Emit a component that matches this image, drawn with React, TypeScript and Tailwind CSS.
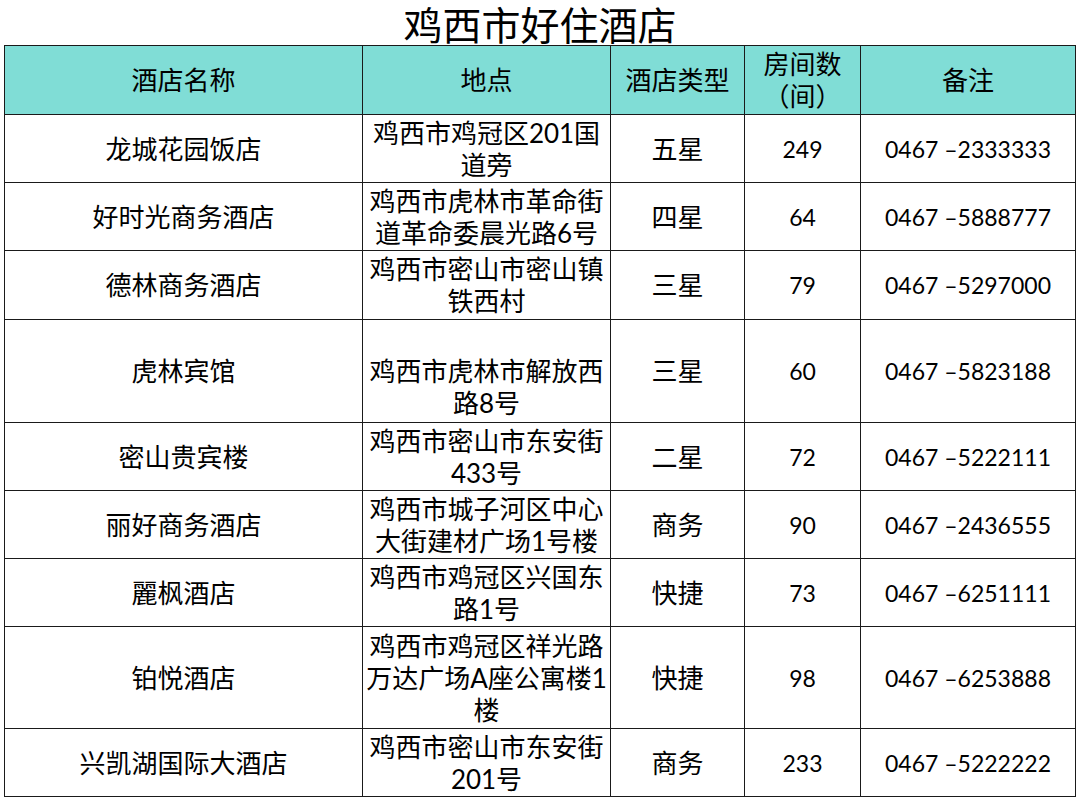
const rows: { name: string; addr: string[]; type: string; rooms: string; phone: string; h: string }[] = [
  { name: "龙城花园饭店", addr: ["鸡西市鸡冠区201国", "道旁"], type: "五星", rooms: "249", phone: "0467 –2333333", h: "h-[68px]" },
  { name: "好时光商务酒店", addr: ["鸡西市虎林市革命街", "道革命委晨光路6号"], type: "四星", rooms: "64", phone: "0467 –5888777", h: "h-[68px]" },
  { name: "德林商务酒店", addr: ["鸡西市密山市密山镇", "铁西村"], type: "三星", rooms: "79", phone: "0467 –5297000", h: "h-[69px]" },
  { name: "虎林宾馆", addr: ["\u00a0", "鸡西市虎林市解放西", "路8号"], type: "三星", rooms: "60", phone: "0467 –5823188", h: "h-[103px]" },
  { name: "密山贵宾楼", addr: ["鸡西市密山市东安街", "433号"], type: "二星", rooms: "72", phone: "0467 –5222111", h: "h-[68px]" },
  { name: "丽好商务酒店", addr: ["鸡西市城子河区中心", "大街建材广场1号楼"], type: "商务", rooms: "90", phone: "0467 –2436555", h: "h-[68px]" },
  { name: "麗枫酒店", addr: ["鸡西市鸡冠区兴国东", "路1号"], type: "快捷", rooms: "73", phone: "0467 –6251111", h: "h-[68px]" },
  { name: "铂悦酒店", addr: ["鸡西市鸡冠区祥光路", "万达广场A座公寓楼1", "楼"], type: "快捷", rooms: "98", phone: "0467 –6253888", h: "h-[102px]" },
  { name: "兴凯湖国际大酒店", addr: ["鸡西市密山市东安街", "201号"], type: "商务", rooms: "233", phone: "0467 –5222222", h: "h-[68px]" },
];

const cell = "border border-[#1a1a1a] p-0 text-center align-middle";

export default function App() {
  return (
    <div className="w-[1080px] h-[801px] bg-white text-black font-['Lato','Noto_Sans_CJK_SC',sans-serif]">
      <div className="h-[45px] flex items-center justify-center text-[39px] leading-[40px] font-['Noto_Sans_CJK_SC',sans-serif]">
        鸡西市好住酒店
      </div>
      <table className="ml-[4px] border-collapse table-fixed w-[1071px] text-[26px] leading-[32px]">
        <colgroup>
          <col className="w-[358px]" />
          <col className="w-[248px]" />
          <col className="w-[134px]" />
          <col className="w-[116px]" />
          <col className="w-[215px]" />
        </colgroup>
        <thead>
          <tr className="h-[69px] bg-[#80ddd6]">
            <th className={`${cell} font-normal`}>酒店名称</th>
            <th className={`${cell} font-normal`}>地点</th>
            <th className={`${cell} font-normal`}>酒店类型</th>
            <th className={`${cell} font-normal`}>
              <div>房间数</div>
              <div>（间）</div>
            </th>
            <th className={`${cell} font-normal`}>备注</th>
          </tr>
        </thead>
        <tbody>
          {rows.map((r) => (
            <tr key={r.name} className={r.h}>
              <td className={cell}>{r.name}</td>
              <td className={cell}>
                {r.addr.map((l, i) => (
                  <div key={i} className="whitespace-nowrap">{l}</div>
                ))}
              </td>
              <td className={cell}>{r.type}</td>
              <td className={`${cell} text-[23px]`}>{r.rooms}</td>
              <td className={`${cell} text-[23px]`}>{r.phone}</td>
            </tr>
          ))}
        </tbody>
      </table>
    </div>
  );
}
